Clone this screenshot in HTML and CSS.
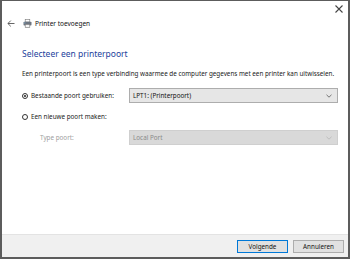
FILE: index.html
```html
<!DOCTYPE html>
<html lang="nl">
<head>
<meta charset="UTF-8">
<meta name="viewport" content="width=device-width, initial-scale=1.0">
<title>Printer toevoegen</title>
<link rel="stylesheet" href="styles.css">
</head>
<body>

<div class="window">
    <div class="titlebar">
        <span class="close">
            <svg width="8" height="8" viewBox="0 0 8 8"><path d="M0.5 0.5L7.5 7.5M7.5 0.5L0.5 7.5" stroke="#444" stroke-width="1.1"/></svg>
        </span>
    </div>
    <div class="nav">
        <span class="back">
            <svg width="8" height="7" viewBox="0 0 8 7"><path d="M7.5 3.5H1M3.8 0.6L0.9 3.5L3.8 6.4" fill="none" stroke="#555" stroke-width="0.9"/></svg>
        </span>
        <span class="printer">
            <svg width="9" height="9" viewBox="0 0 9 9">
                <rect x="2.2" y="0.5" width="4.6" height="2.5" fill="#fff" stroke="#777" stroke-width="0.6"/>
                <rect x="0.5" y="2.8" width="8" height="3.8" rx="0.8" fill="#6d7580"/>
                <rect x="2.2" y="5.4" width="4.6" height="3.1" fill="#f4f4f4" stroke="#777" stroke-width="0.6"/>
                <rect x="1.3" y="3.6" width="1" height="0.7" fill="#8fd3ff"/>
            </svg>
        </span>
        <span class="title">Printer toevoegen</span>
    </div>

    <div class="content">
        <h1>Selecteer een printerpoort</h1>
        <p class="intro">Een printerpoort is een type verbinding waarmee de computer gegevens met een printer kan uitwisselen.</p>

        <div class="row">
            <label class="option"><span class="radio checked"></span>Bestaande poort gebruiken:</label>
            <div class="combo">
                <span>LPT1: (Printerpoort)</span>
                <svg width="6" height="4" viewBox="0 0 6 4"><path d="M0.5 0.8L3 3.2L5.5 0.8" fill="none" stroke="#555" stroke-width="0.8"/></svg>
            </div>
        </div>

        <div class="row">
            <label class="option"><span class="radio"></span>Een nieuwe poort maken:</label>
        </div>

        <div class="row sub">
            <label class="sublabel">Type poort:</label>
            <div class="combo disabled">
                <span>Local Port</span>
                <svg width="6" height="4" viewBox="0 0 6 4"><path d="M0.5 0.8L3 3.2L5.5 0.8" fill="none" stroke="#b5b5b5" stroke-width="0.8"/></svg>
            </div>
        </div>
    </div>

    <div class="footer">
        <button class="btn default">Volgende</button>
        <button class="btn">Annuleren</button>
    </div>
</div>

</body>
</html>
```

FILE: styles.css
```css
html, body {
    margin: 0;
    padding: 0;
}
body {
    font-family: "Noto Sans", "Open Sans", sans-serif;
    background-color: #fff;
}
.window {
    width: 350px;
    height: 259px;
    box-sizing: border-box;
    border: 2px solid #5c5c5c;
    border-top-width: 1px;
    display: flex;
    flex-direction: column;
    background-color: #fff;
}
.titlebar {
    display: flex;
    justify-content: flex-end;
    height: 16px;
    padding-right: 5px;
}
.close {
    display: flex;
    margin-top: 4px;
}
.nav {
    display: flex;
    align-items: center;
    height: 12px;
    padding-left: 5px;
}
.back {
    display: flex;
    margin-right: 8px;
}
.printer {
    display: flex;
    margin-right: 3px;
}
.title {
    font-size: 6.5px;
    color: #111;
}
.content {
    flex: 1;
    padding: 19px 10px 0 20px;
}
h1 {
    font-size: 8.5px;
    font-weight: normal;
    color: #24429c;
    margin: 0 0 10px 0;
}
.intro {
    font-size: 6.3px;
    color: #222;
    margin: 0 0 10px 0;
    white-space: nowrap;
}
.row {
    display: flex;
    align-items: center;
    height: 15px;
    margin-bottom: 6px;
}
.option {
    display: flex;
    align-items: center;
    width: 107px;
    font-size: 6.3px;
    color: #222;
}
.radio {
    width: 6px;
    height: 6px;
    border: 1px solid #333;
    border-radius: 50%;
    margin-right: 3px;
    box-sizing: border-box;
    position: relative;
}
.radio.checked::after {
    content: "";
    position: absolute;
    top: 1px;
    left: 1px;
    width: 2px;
    height: 2px;
    border-radius: 50%;
    background-color: #222;
}
.sublabel {
    width: 89px;
    padding-left: 18px;
    font-size: 6.3px;
    color: #a0a0a0;
}
.combo {
    flex: 1;
    height: 15px;
    box-sizing: border-box;
    border: 1px solid #adadad;
    background-color: #e6e6e6;
    display: flex;
    align-items: center;
    justify-content: space-between;
    padding: 0 5px 0 3px;
    font-size: 6.3px;
    color: #111;
}
.combo.disabled {
    background-color: #d9d9d9;
    border-color: #cfcfcf;
    color: #8a8a8a;
}
.footer {
    height: 22px;
    background-color: #f0f0f0;
    border-top: 1px solid #e3e3e3;
    display: flex;
    justify-content: flex-end;
    align-items: center;
    gap: 5px;
    padding-right: 4px;
}
.btn {
    width: 51px;
    height: 13px;
    font-family: "Noto Sans", "Open Sans", sans-serif;
    font-size: 6.3px;
    color: #111;
    background-color: #e1e1e1;
    border: 1px solid #adadad;
    padding: 0;
}
.btn.default {
    border-color: #0078d7;
}
```
